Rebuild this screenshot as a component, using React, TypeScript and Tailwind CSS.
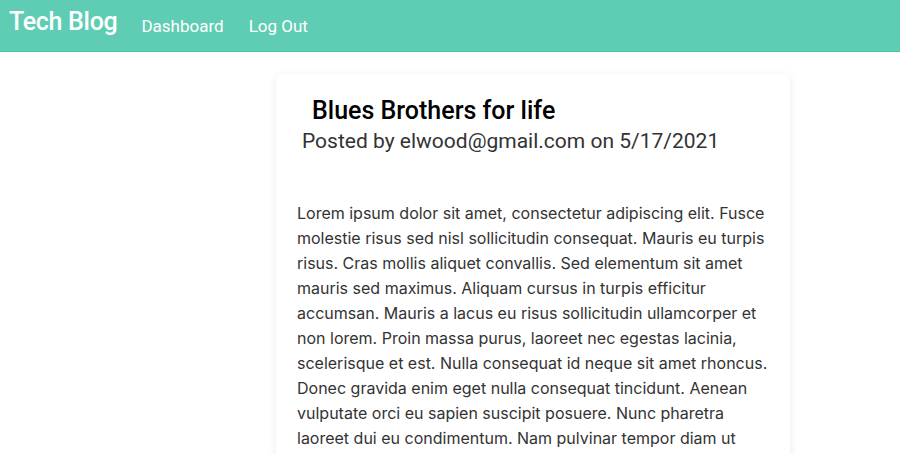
import React from 'react';

const post = {
  title: 'Blues Brothers for life',
  author: 'elwood@gmail.com',
  date: '5/17/2021',
  body:
    'Lorem ipsum dolor sit amet, consectetur adipiscing elit. Fusce molestie risus sed nisl sollicitudin consequat. Mauris eu turpis risus. Cras mollis aliquet convallis. Sed elementum sit amet mauris sed maximus. Aliquam cursus in turpis efficitur accumsan. Mauris a lacus eu risus sollicitudin ullamcorper et non lorem. Proin massa purus, laoreet nec egestas lacinia, scelerisque et est. Nulla consequat id neque sit amet rhoncus. Donec gravida enim eget nulla consequat tincidunt. Aenean vulputate orci eu sapien suscipit posuere. Nunc pharetra laoreet dui eu condimentum. Nam pulvinar tempor diam ut ultrices.',
};

const Header: React.FC = () => (
  <header className="h-[52px] bg-[#5fcdb3] border-b border-[#4fc4a8] flex items-center px-[9px] font-['Roboto',sans-serif] text-white">
    <a href="#" className="text-[25px] font-medium tracking-[-0.3px] mb-[8px]">Tech Blog</a>
    <nav className="flex items-center gap-[25px] ml-[24px] text-[17px] mt-[3px]">
      <a href="#">Dashboard</a>
      <a href="#">Log Out</a>
    </nav>
  </header>
);

export default function App() {
  return (
    <div className="min-h-screen bg-white">
      <Header />
      <main className="pt-[22px]">
        <article className="ml-[276px] w-[514px] bg-white rounded-[6px] shadow-[0_2px_10px_rgba(0,0,0,0.08)] pb-[40px]">
          <div className="pt-[22px] pl-[26px] font-['Roboto',sans-serif]">
            <h2 className="ml-[10px] text-[25px] leading-[30px] font-medium text-black">{post.title}</h2>
            <p className="mt-[1px] text-[21px] leading-[28px] text-[#333]">
              Posted by {post.author} on {post.date}
            </p>
          </div>
          <p className="mt-[46px] px-[21px] font-['Inter',sans-serif] text-[16px] leading-[25px] text-[#333]">
            {post.body}
          </p>
        </article>
      </main>
    </div>
  );
}
